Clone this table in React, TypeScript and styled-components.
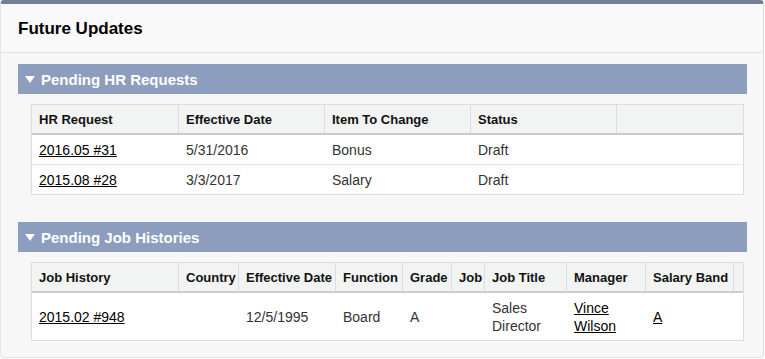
import styled, { createGlobalStyle } from "styled-components";

const GlobalStyle = createGlobalStyle`
  html, body {
    margin: 0;
    padding: 0;
    background: #ffffff;
    font-family: "Liberation Sans", Arial, sans-serif;
  }
`;

const hrCols = "147px 146px 146px 146px 1fr";
const jobCols = "147px 60px 97px 67px 49px 33px 82px 79px 88px 1fr";

const hrHeaders = ["HR Request", "Effective Date", "Item To Change", "Status", ""];
const jobHeaders = [
  "Job History",
  "Country",
  "Effective Date",
  "Function",
  "Grade",
  "Job",
  "Job Title",
  "Manager",
  "Salary Band",
  "",
];

function App() {
  return (
    <>
      <GlobalStyle />
      <Card>
        <CardHeader>
          <Title>Future Updates</Title>
        </CardHeader>
        <CardBody>
          <Section>
            <SectionBar>
              <Caret />
              Pending HR Requests
            </SectionBar>
            <Table role="table">
              <HeadRow $cols={hrCols} role="row">
                {hrHeaders.map((h, i) => (
                  <HeadCell key={i} role="columnheader">{h}</HeadCell>
                ))}
              </HeadRow>
              <Row $cols={hrCols} role="row">
                <Cell><RecordLink href="#">2016.05 #31</RecordLink></Cell>
                <Cell>5/31/2016</Cell>
                <Cell>Bonus</Cell>
                <Cell>Draft</Cell>
                <Cell />
              </Row>
              <Row $cols={hrCols} role="row">
                <Cell><RecordLink href="#">2015.08 #28</RecordLink></Cell>
                <Cell>3/3/2017</Cell>
                <Cell>Salary</Cell>
                <Cell>Draft</Cell>
                <Cell />
              </Row>
            </Table>
          </Section>

          <Section>
            <SectionBar>
              <Caret />
              Pending Job Histories
            </SectionBar>
            <Table role="table">
              <HeadRow $cols={jobCols} role="row">
                {jobHeaders.map((h, i) => (
                  <HeadCell key={i} role="columnheader">{h}</HeadCell>
                ))}
              </HeadRow>
              <Row $cols={jobCols} $height={47} role="row">
                <Cell><RecordLink href="#">2015.02 #948</RecordLink></Cell>
                <Cell />
                <Cell>12/5/1995</Cell>
                <Cell>Board</Cell>
                <Cell>A</Cell>
                <Cell />
                <Cell>Sales<br />Director</Cell>
                <Cell><RecordLink href="#">Vince<br />Wilson</RecordLink></Cell>
                <Cell><RecordLink href="#">A</RecordLink></Cell>
                <Cell />
              </Row>
            </Table>
          </Section>
        </CardBody>
      </Card>
    </>
  );
}

const Card = styled.div`
  width: 764px;
  box-sizing: border-box;
  background: #f7f7f7;
  border-top: 4px solid #747e96;
  border-left: 1px solid #e6e6e6;
  border-right: 1px solid #dcdcdc;
  border-bottom: 1px solid #e2e2e2;
  border-radius: 4px;
`;

const CardHeader = styled.div`
  height: 47px;
  display: flex;
  align-items: center;
  padding: 1px 0 0 17px;
  background: #f9f9f9;
  border-bottom: 1px solid #e1e1e1;
`;

const Title = styled.h2`
  margin: 0;
  font-size: 17px;
  font-weight: bold;
  color: #000000;
`;

const CardBody = styled.div`
  display: flex;
  flex-direction: column;
  gap: 27px;
  padding: 11px 16px 16px 17px;
`;

const Section = styled.section`
  display: flex;
  flex-direction: column;
  gap: 10px;
`;

const SectionBar = styled.div`
  height: 30px;
  display: flex;
  align-items: center;
  gap: 6px;
  padding-left: 7px;
  background: #8d9dbd;
  color: #ffffff;
  font-size: 15px;
  font-weight: bold;
`;

const Caret = styled.span`
  width: 0;
  height: 0;
  border-left: 5px solid transparent;
  border-right: 5px solid transparent;
  border-top: 7px solid #ffffff;
  margin-top: 1px;
`;

const Table = styled.div`
  margin-left: 13px;
  width: 713px;
  box-sizing: border-box;
  background: #ffffff;
  border: 1px solid #dddddd;
`;

const HeadRow = styled.div<{ $cols: string }>`
  display: grid;
  grid-template-columns: ${(p) => p.$cols};
  height: 28px;
  background: #f2f3f3;
  border-bottom: 2px solid #cccccc;
`;

const HeadCell = styled.div`
  display: flex;
  align-items: center;
  padding-left: 7px;
  font-size: 13px;
  font-weight: bold;
  color: #111111;
  border-right: 1px solid #dddddd;
  white-space: nowrap;
  overflow: hidden;

  &:last-child {
    border-right: none;
  }
`;

const Row = styled.div<{ $cols: string; $height?: number }>`
  display: grid;
  grid-template-columns: ${(p) => p.$cols};
  height: ${(p) => p.$height ?? 29}px;
  border-bottom: 1px solid #e9e4d6;

  &:last-child {
    border-bottom: none;
  }
`;

const Cell = styled.div`
  display: flex;
  align-items: center;
  padding-left: 7px;
  font-size: 14px;
  line-height: 18px;
  color: #333333;
`;

const RecordLink = styled.a`
  color: #000000;
  text-decoration: underline;
`;

export default App;
